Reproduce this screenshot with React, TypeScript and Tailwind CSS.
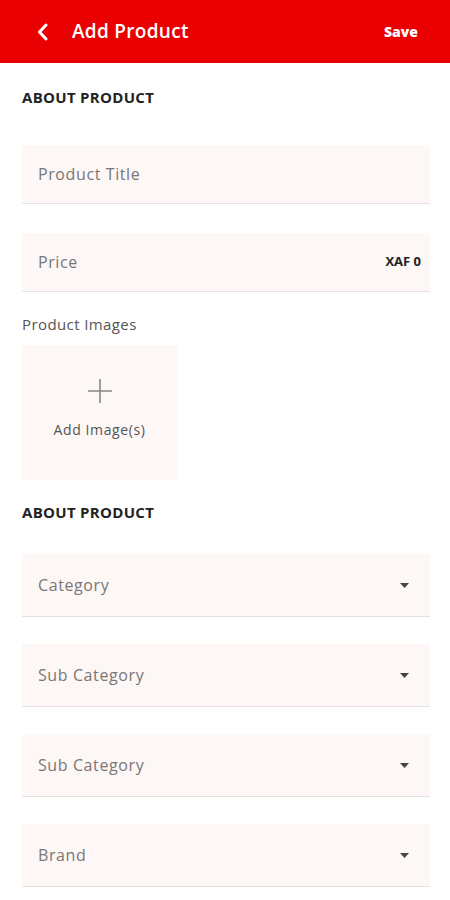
import { type FC } from "react";

const font = { fontFamily: '"Open Sans", "Liberation Sans", sans-serif' };

const Caret: FC = () => (
  <svg width="9" height="5" viewBox="0 0 9 5" className="shrink-0">
    <path d="M0 0h9L4.5 5z" fill="#444" />
  </svg>
);

const SectionTitle: FC<{ label: string }> = ({ label }) => (
  <h2 className="text-[15px] leading-5 font-bold text-[#222] tracking-[0.3px]">{label}</h2>
);

const TextField: FC<{ placeholder: string; suffix?: string }> = ({ placeholder, suffix }) => (
  <div className="h-[59px] bg-[#fdf7f6] border-b border-[#e6e2e1] flex items-center justify-between pl-4 pr-[9px]">
    <span className="text-[16px] tracking-[0.6px] text-[#7a7676]">{placeholder}</span>
    {suffix && <span className="text-[13px] font-bold text-[#222]">{suffix}</span>}
  </div>
);

const SelectField: FC<{ placeholder: string }> = ({ placeholder }) => (
  <div className="h-[63px] bg-[#fdf7f6] border-b border-[#e6e2e1] flex items-center justify-between pl-4 pr-[21px]">
    <span className="text-[16px] tracking-[0.6px] text-[#7a7676]">{placeholder}</span>
    <Caret />
  </div>
);

const App: FC = () => {
  return (
    <div className="w-[450px] min-h-[900px] bg-white" style={font}>
      <header className="h-[63px] bg-[#ea0000] flex items-center justify-between pl-[36px] pr-[32px]">
        <div className="flex items-center gap-[22px]">
          <svg width="14" height="18" viewBox="0 0 14 18" fill="none">
            <path d="M10 2L3.5 9l6.5 7" stroke="white" strokeWidth="3" strokeLinecap="round" strokeLinejoin="round" />
          </svg>
          <h1 className="text-[19px] font-semibold tracking-[0.3px] text-white">Add Product</h1>
        </div>
        <button className="text-[14px] font-extrabold text-white">Save</button>
      </header>

      <main className="pl-[22px] pr-[20px] pb-4">
        <div className="pt-[24px]">
          <SectionTitle label="ABOUT PRODUCT" />
        </div>

        <div className="mt-[38px] flex flex-col gap-[29px]">
          <TextField placeholder="Product Title" />
          <TextField placeholder="Price" suffix="XAF 0" />
        </div>

        <p className="mt-[22px] text-[15px] leading-5 tracking-[0.4px] text-[#555]">Product Images</p>

        <div className="mt-[11px] w-[155px] h-[135px] bg-[#fdf7f6] flex flex-col items-center pt-[33px] gap-[16px]">
          <svg width="26" height="26" viewBox="0 0 26 26">
            <path d="M13 1v24M1 13h24" stroke="#888" strokeWidth="1.6" />
          </svg>
          <span className="text-[14px] leading-5 tracking-[0.6px] text-[#555]">Add Image(s)</span>
        </div>

        <div className="mt-[22px]">
          <SectionTitle label="ABOUT PRODUCT" />
        </div>

        <div className="mt-[32px] flex flex-col gap-[27px]">
          <SelectField placeholder="Category" />
          <SelectField placeholder="Sub Category" />
          <SelectField placeholder="Sub Category" />
          <SelectField placeholder="Brand" />
        </div>
      </main>
    </div>
  );
};

export default App;
